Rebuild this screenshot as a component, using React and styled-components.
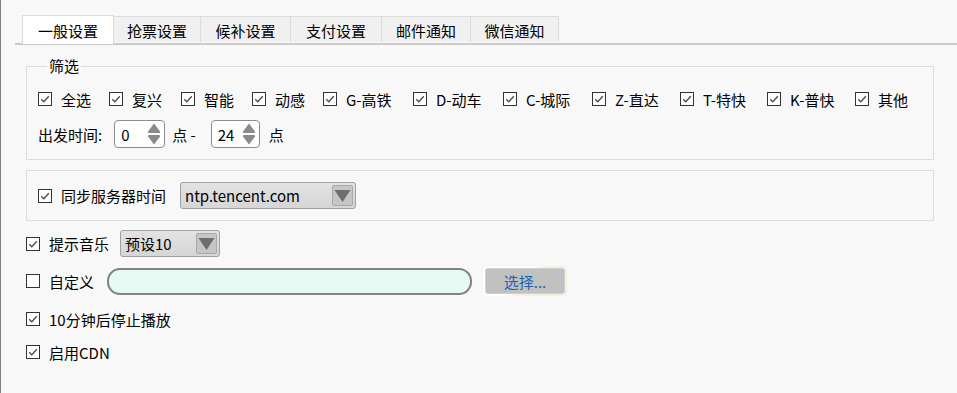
import React from "react";
import styled, { createGlobalStyle } from "styled-components";

const Global = createGlobalStyle`
  html, body { margin: 0; padding: 0; background: #f8f8f8; }
  body { font-family: "Noto Sans CJK SC", "Noto Sans", sans-serif; font-size: 15px; color: #000; }
  * { box-sizing: border-box; }
`;

const Frame = styled.div`
  width: 957px;
  height: 393px;
  background: #f8f8f8;
  border-left: 1px solid #808080;
  padding-top: 15px;
  overflow: hidden;
`;

const TabBar = styled.div`
  margin-left: 14px;
  padding-left: 7px;
  display: flex;
  align-items: flex-end;
  border-bottom: 2px solid #cacaca;
  height: 30px;
`;

const Tab = styled.div`
  width: ${p => p.$w}px;
  height: ${p => (p.$active ? 29 : 26)}px;
  margin-bottom: ${p => (p.$active ? -1 : 1)}px;
  display: flex;
  align-items: center;
  justify-content: center;
  background: ${p => (p.$active ? "#ffffff" : "#f0f0f0")};
  border: 1px solid #dcdcdc;
  border-left-width: ${p => (p.$first ? 1 : 0)}px;
  border-bottom: none;
  font-size: 15px;
  line-height: 1;
  padding-top: ${p => (p.$active ? 0 : 1)}px;
`;

const Content = styled.div`
  padding: 0 23px 0 25px;
  display: flex;
  flex-direction: column;
`;

const Group = styled.fieldset`
  margin: ${p => p.$mt}px 0 0 0;
  border: 1px solid #dcdcdc;
  padding: ${p => p.$pad};
  display: flex;
  flex-direction: column;
  gap: ${p => p.$gap || 0}px;
  min-width: 0;
`;

const Legend = styled.legend`
  padding: 0 2px;
  margin-left: 9px;
  font-size: 15px;
  line-height: 16px;
`;

const Row = styled.div`
  display: flex;
  align-items: center;
  height: ${p => p.$h || 20}px;
  margin-top: ${p => p.$mt || 0}px;
`;

const CheckItem = styled.label`
  display: flex;
  align-items: center;
  gap: 9px;
  width: ${p => (p.$w ? `${p.$w}px` : "auto")};
  flex: none;
  white-space: nowrap;
  line-height: 1;
`;

const Box = styled.span`
  width: 14px;
  height: 14px;
  border: 1px solid #333;
  background: #fff;
  display: inline-flex;
  align-items: center;
  justify-content: center;
  flex: none;
`;

const Text = styled.span`
  white-space: nowrap;
  line-height: 1;
  margin: ${p => p.$m || 0};
`;

function Check({ checked = true, children, w }) {
  return (
    <CheckItem $w={w}>
      <Box>
        {checked && (
          <svg width="10" height="10" viewBox="0 0 10 10">
            <path d="M1.2 5.2 L3.8 7.8 L8.8 2.2" fill="none" stroke="#4a4a4a" strokeWidth="1.3" />
          </svg>
        )}
      </Box>
      <Text>{children}</Text>
    </CheckItem>
  );
}

const Spin = styled.div`
  width: ${p => p.$w}px;
  height: 28px;
  border: 1px solid #8c8c8c;
  border-radius: 4px;
  background: #fff;
  display: flex;
  align-items: center;
  justify-content: space-between;
  padding: 0 2px 0 6px;
  margin-left: ${p => p.$ml || 0}px;
  font-size: 15px;
  line-height: 1;
`;

function SpinBox({ value, w, ml }) {
  return (
    <Spin $w={w} $ml={ml}>
      <span>{value}</span>
      <svg width="16" height="24" viewBox="0 0 16 24">
        <path d="M8 1.5 L14 9.5 Q14.5 11 13 11 L3 11 Q1.5 11 2 9.5 Z" fill="#8a8a8a" />
        <path d="M8 22.5 L14 14.5 Q14.5 13 13 13 L3 13 Q1.5 13 2 14.5 Z" fill="#8a8a8a" />
      </svg>
    </Spin>
  );
}

const Combo = styled.div`
  width: ${p => p.$w}px;
  height: 27px;
  border: 1px solid #a0a0a0;
  border-radius: 3px;
  background: linear-gradient(#e2e2e2, #d6d6d6);
  display: flex;
  align-items: stretch;
  margin-left: ${p => p.$ml || 0}px;
  padding: 2px;
`;

const ComboText = styled.div`
  flex: 1;
  display: flex;
  align-items: center;
  padding-left: 2px;
  font-size: 15px;
  line-height: 1;
`;

const ComboArrow = styled.div`
  width: 21px;
  border: 1px solid #a8a8a8;
  border-radius: 2px;
  background: #c6c6c6;
  display: flex;
  align-items: center;
  justify-content: center;
`;

function ComboBox({ w, ml, children }) {
  return (
    <Combo $w={w} $ml={ml}>
      <ComboText>{children}</ComboText>
      <ComboArrow>
        <svg width="17" height="14" viewBox="0 0 17 14">
          <path d="M0.5 1 L16.5 1 L8.5 13 Z" fill="#6e6e6e" />
        </svg>
      </ComboArrow>
    </Combo>
  );
}

const Options = styled.div`
  display: flex;
  flex-direction: column;
  padding-top: 9px;
`;

const PathInput = styled.div`
  width: 365px;
  height: 27px;
  border: 2px solid #828282;
  border-radius: 13px;
  background: #e6faf3;
  margin-left: 13px;
`;

const ChooseWrap = styled.div`
  margin-left: 11px;
  padding: 2px;
  border-radius: 5px;
  background: linear-gradient(135deg, #ffffff 45%, #f3f1de 55%);
`;

const ChooseButton = styled.button`
  width: 80px;
  height: 26px;
  border: 1px solid #d0d0d0;
  border-radius: 3px;
  background: #c1c1c1;
  color: #1a63b8;
  font-family: inherit;
  font-size: 15px;
  padding: 0;
  line-height: 1;
`;

const tabs = [
  ["一般设置", 92],
  ["抢票设置", 87],
  ["候补设置", 90],
  ["支付设置", 91],
  ["邮件通知", 89],
  ["微信通知", 88],
];

const filters = [
  ["全选", 71],
  ["复兴", 72],
  ["智能", 71],
  ["动感", 71],
  ["G-高铁", 90],
  ["D-动车", 90],
  ["C-城际", 89],
  ["Z-直达", 88],
  ["T-特快", 87],
  ["K-普快", 88],
  ["其他", 0],
];

export default function App() {
  return (
    <>
      <Global />
      <Frame>
        <TabBar>
          {tabs.map(([t, w], i) => (
            <Tab key={t} $w={w} $active={i === 0} $first={i === 0}>
              {t}
            </Tab>
          ))}
        </TabBar>
        <Content>
          <Group $pad="14px 0 11px 11px" $gap={10} $mt={13}>
            <Legend>筛选</Legend>
            <Row $h={22}>
              {filters.map(([f, w]) => (
                <Check key={f} w={w || undefined}>{f}</Check>
              ))}
            </Row>
            <Row $h={28}>
              <Text>出发时间:</Text>
              <SpinBox value="0" w={51} ml={12} />
              <Text $m="0 15px 0 7px">点 -</Text>
              <SpinBox value="24" w={49} />
              <Text $m="0 0 0 9px">点</Text>
            </Row>
          </Group>
          <Group $pad="11px 0 11px 11px" $mt={10}>
            <Row $h={27}>
              <Check>同步服务器时间</Check>
              <ComboBox w={176} ml={14}>ntp.tencent.com</ComboBox>
            </Row>
          </Group>
          <Options>
            <Row $h={27}>
              <Check>提示音乐</Check>
              <ComboBox w={100} ml={11}>预设10</ComboBox>
            </Row>
            <Row $h={30} $mt={9}>
              <Check checked={false}>自定义</Check>
              <PathInput />
              <ChooseWrap>
                <ChooseButton>选择...</ChooseButton>
              </ChooseWrap>
            </Row>
            <Row $h={22} $mt={12}>
              <Check>10分钟后停止播放</Check>
            </Row>
            <Row $h={22} $mt={11}>
              <Check>启用CDN</Check>
            </Row>
          </Options>
        </Content>
      </Frame>
    </>
  );
}
